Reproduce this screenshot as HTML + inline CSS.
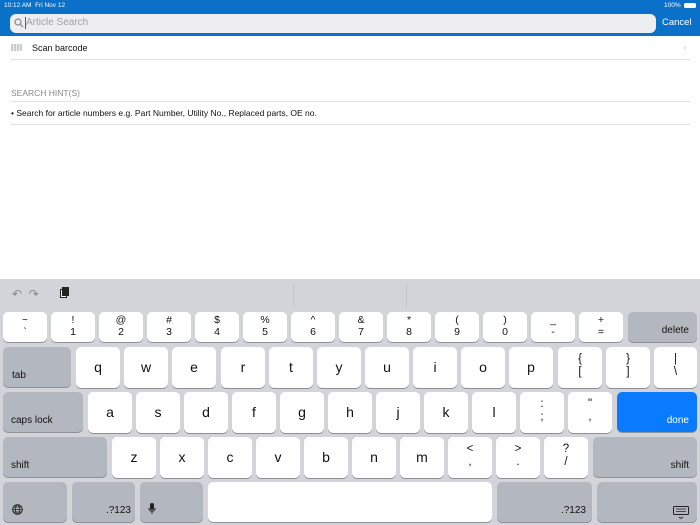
<!DOCTYPE html><html><head><meta charset="utf-8"><style>
*{margin:0;padding:0;box-sizing:border-box}
body{width:700px;height:525px;overflow:hidden;background:#fff;font-family:"Liberation Sans",sans-serif;position:relative}
.top{position:absolute;left:0;top:0;width:700px;height:36px;background:#0a70c8}
.st{position:absolute;top:2px;font-size:6.5px;color:#fff}
.sf{position:absolute;left:10px;top:14px;width:646px;height:19px;background:#eeeef0;border-radius:6px}
.sf span{position:absolute;left:16px;top:3px;font-size:10px;color:#a0a0a4}
.cancel{position:absolute;left:662px;top:17px;font-size:9.5px;color:#fff}
.txt{position:absolute;font-size:9px;color:#111}
.line{position:absolute;left:10px;right:10px;height:1px;background:#e4e4e6}
.kb{position:absolute;left:0;top:279px;width:700px;height:246px;background:#d2d4da}
.k{position:absolute;background:#fff;border-radius:5px;box-shadow:0 1px 0 #8e9095;text-align:center;color:#111}
.g{background:#b3b7bf;font-size:9px}
.n{width:44px;height:30px;top:312px;font-size:10.5px;line-height:11.5px;padding-top:3px}
.l{width:44px;height:41px;font-size:14px;line-height:40px}
.s{width:44px;height:41px;font-size:11.5px;line-height:13px;padding-top:6px}
.g span{position:absolute;bottom:6px;font-size:10px}
</style></head><body>
<div class="top">
<div class="st" style="left:4px">10:12 AM&nbsp;&nbsp;Fri Nov 12</div>
<div class="st" style="left:664px">100%</div>
<div style="position:absolute;left:684px;top:3px;width:12px;height:5px;border:1px solid #fff;border-radius:1.5px;background:#fff"></div>
<div class="sf"><svg style="position:absolute;left:4px;top:4px" width="10" height="10"><circle cx="4" cy="4" r="3" fill="none" stroke="#888" stroke-width="1.2"/><path d="M6.3 6.3L9 9" stroke="#888" stroke-width="1.3"/></svg><div style="position:absolute;left:15px;top:3px;width:1px;height:12px;background:#0a70c8"></div><span>Article Search</span></div>
<div class="cancel">Cancel</div>
</div>
<div style="position:absolute;left:11px;top:44px;width:11px;height:7px;background:repeating-linear-gradient(90deg,#ccc 0 2px,#eee 2px 3px)"></div>
<div class="txt" style="left:32px;top:43px">Scan barcode</div>
<div class="txt" style="left:683px;top:42px;color:#ccc">›</div>
<div class="line" style="top:59px"></div>
<div class="txt" style="left:11px;top:88px;color:#888;font-size:8.5px">SEARCH HINT(S)</div>
<div class="line" style="top:101px"></div>
<div class="txt" style="left:11px;top:108px;font-size:8.5px">• Search for article numbers e.g. Part Number, Utility No., Replaced parts, OE no.</div>
<div class="line" style="top:124px"></div>
<div class="kb"></div>
<div style="position:absolute;left:293px;top:284px;width:1px;height:22px;background:#c2c4c9"></div>
<div style="position:absolute;left:406px;top:284px;width:1px;height:22px;background:#c2c4c9"></div>
<div style="position:absolute;left:12px;top:287px;font-size:12px;color:#888">↶&nbsp;&nbsp;↷</div>
<div style="position:absolute;left:60px;top:289px;width:7px;height:9px;border:1.5px solid #222;background:#fff"></div><div style="position:absolute;left:62px;top:287px;width:7px;height:9px;background:#222"></div>
<div class="k n" style="left:3px">~<br>`</div>
<div class="k n" style="left:51px">!<br>1</div>
<div class="k n" style="left:99px">@<br>2</div>
<div class="k n" style="left:147px">#<br>3</div>
<div class="k n" style="left:195px">$<br>4</div>
<div class="k n" style="left:243px">%<br>5</div>
<div class="k n" style="left:291px">^<br>6</div>
<div class="k n" style="left:339px">&amp;<br>7</div>
<div class="k n" style="left:387px">*<br>8</div>
<div class="k n" style="left:435px">(<br>9</div>
<div class="k n" style="left:483px">)<br>0</div>
<div class="k n" style="left:531px">_<br>-</div>
<div class="k n" style="left:579px">+<br>=</div>
<div class="k g" style="left:628px;top:312px;width:69px;height:30px"><span style="right:8px">delete</span></div>
<div class="k g" style="left:3px;top:347px;width:68px;height:40px"><span style="left:9px">tab</span></div>
<div class="k l" style="left:76px;top:347px">q</div>
<div class="k l" style="left:124px;top:347px">w</div>
<div class="k l" style="left:172px;top:347px">e</div>
<div class="k l" style="left:221px;top:347px">r</div>
<div class="k l" style="left:269px;top:347px">t</div>
<div class="k l" style="left:317px;top:347px">y</div>
<div class="k l" style="left:365px;top:347px">u</div>
<div class="k l" style="left:413px;top:347px">i</div>
<div class="k l" style="left:461px;top:347px">o</div>
<div class="k l" style="left:509px;top:347px">p</div>
<div class="k s" style="left:558px;top:347px">{<br>[</div>
<div class="k s" style="left:606px;top:347px">}<br>]</div>
<div class="k s" style="left:654px;top:347px;width:43px">|<br>\</div>
<div class="k g" style="left:3px;top:392px;width:80px;height:40px"><span style="left:8px">caps lock</span></div>
<div class="k l" style="left:88px;top:392px">a</div>
<div class="k l" style="left:136px;top:392px">s</div>
<div class="k l" style="left:184px;top:392px">d</div>
<div class="k l" style="left:232px;top:392px">f</div>
<div class="k l" style="left:280px;top:392px">g</div>
<div class="k l" style="left:328px;top:392px">h</div>
<div class="k l" style="left:376px;top:392px">j</div>
<div class="k l" style="left:424px;top:392px">k</div>
<div class="k l" style="left:472px;top:392px">l</div>
<div class="k s" style="left:520px;top:392px">:<br>;</div>
<div class="k s" style="left:568px;top:392px">"<br>,</div>
<div class="k g" style="left:617px;top:392px;width:80px;height:40px;background:#0a7bff;color:#fff"><span style="right:8px">done</span></div>
<div class="k g" style="left:3px;top:437px;width:104px;height:40px"><span style="left:8px">shift</span></div>
<div class="k l" style="left:112px;top:437px">z</div>
<div class="k l" style="left:160px;top:437px">x</div>
<div class="k l" style="left:208px;top:437px">c</div>
<div class="k l" style="left:256px;top:437px">v</div>
<div class="k l" style="left:304px;top:437px">b</div>
<div class="k l" style="left:352px;top:437px">n</div>
<div class="k l" style="left:400px;top:437px">m</div>
<div class="k s" style="left:448px;top:437px">&lt;<br>,</div>
<div class="k s" style="left:496px;top:437px">&gt;<br>.</div>
<div class="k s" style="left:544px;top:437px">?<br>/</div>
<div class="k g" style="left:593px;top:437px;width:104px;height:40px"><span style="right:8px">shift</span></div>
<div class="k g" style="left:3px;top:482px;width:64px;height:40px"><svg style="position:absolute;left:9px;top:22px" width="11" height="11"><circle cx="5.5" cy="5.5" r="4.8" fill="none" stroke="#222"/><ellipse cx="5.5" cy="5.5" rx="2" ry="4.8" fill="none" stroke="#222" stroke-width="0.8"/><path d="M0.7 5.5h9.6M1.5 3h8M1.5 8h8" stroke="#222" stroke-width="0.7"/></svg></div>
<div class="k g" style="left:72px;top:482px;width:63px;height:40px"><span style="right:4px">.?123</span></div>
<div class="k g" style="left:140px;top:482px;width:63px;height:40px"><svg style="position:absolute;left:8px;top:21px" width="8" height="12"><rect x="2" y="0" width="4" height="7" rx="2" fill="#222"/><path d="M0.8 5a3.2 3.2 0 0 0 6.4 0M4 8.5V11" stroke="#222" fill="none"/></svg></div>
<div class="k" style="left:208px;top:482px;width:284px;height:40px"></div>
<div class="k g" style="left:497px;top:482px;width:95px;height:40px"><span style="right:6px">.?123</span></div>
<div class="k g" style="left:597px;top:482px;width:100px;height:40px"><svg style="position:absolute;right:8px;top:24px" width="16" height="13"><rect x="0.5" y="0.5" width="15" height="8" rx="1" fill="none" stroke="#222"/><path d="M3 3h10M3 5.5h10M6 11l2 1.5 2-1.5" stroke="#222" stroke-width="0.8" fill="none"/></svg></div>
</body></html>
